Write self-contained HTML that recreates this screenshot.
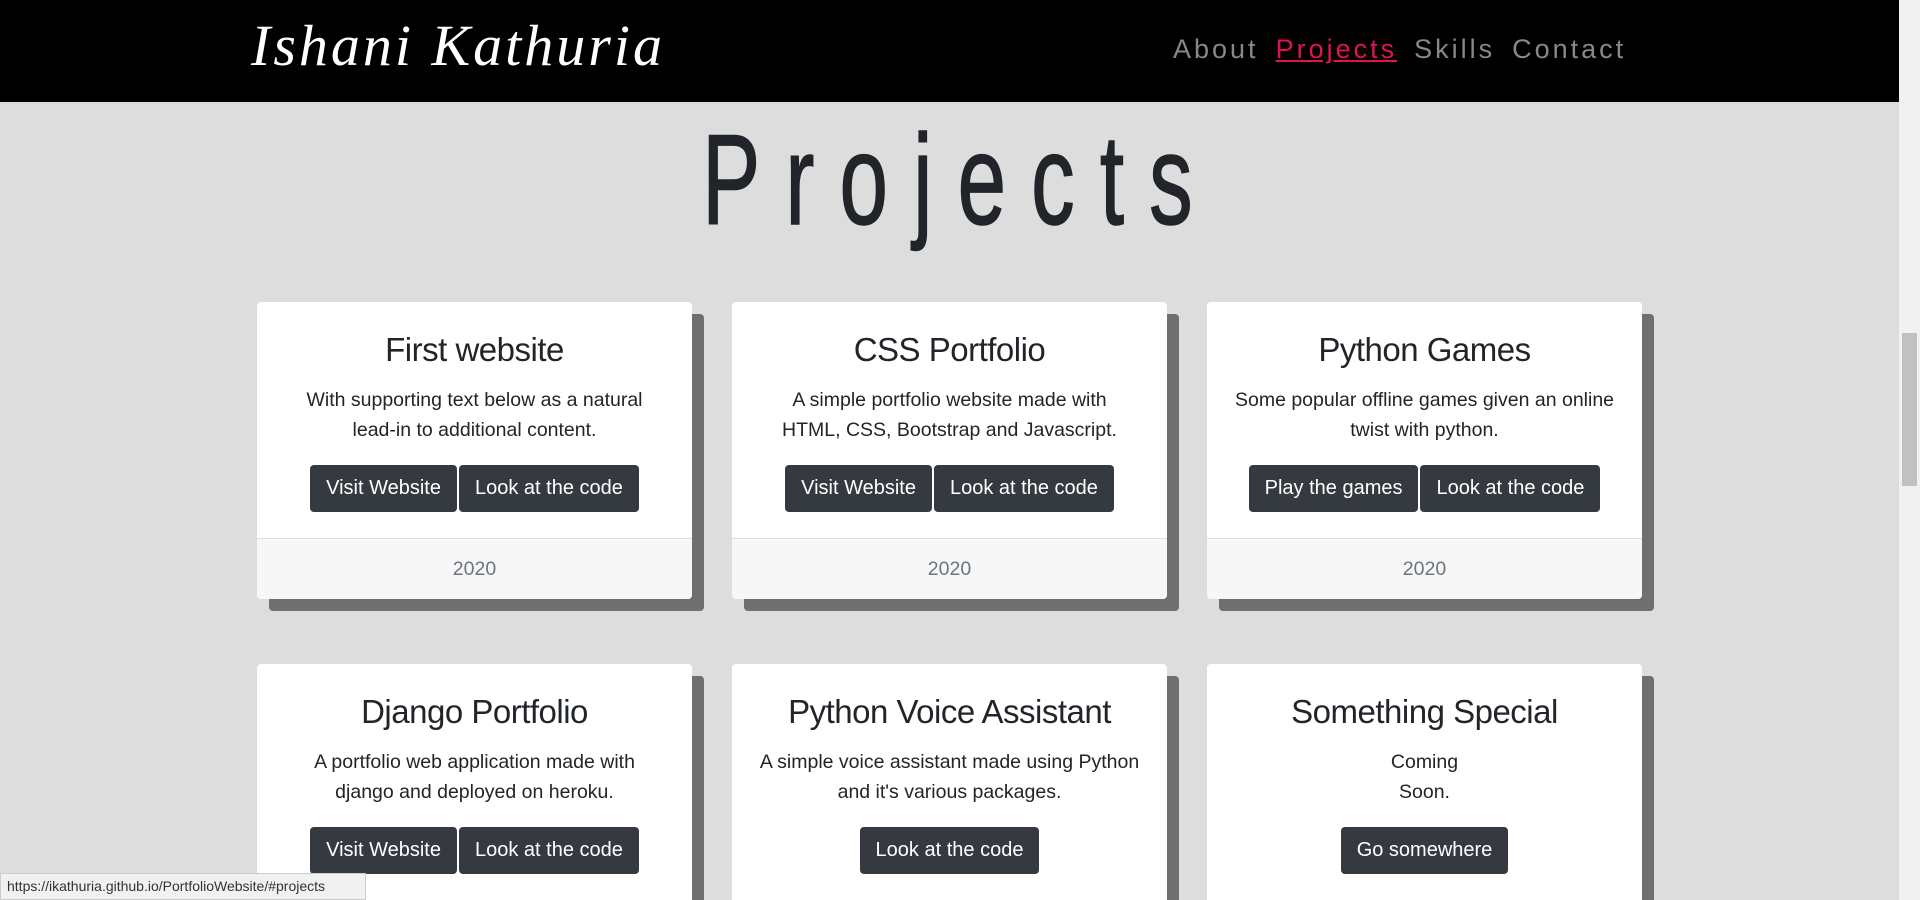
<!DOCTYPE html>
<html><head><meta charset="utf-8"><style>
*{box-sizing:border-box;margin:0;padding:0}
html{width:1920px;height:900px;overflow:hidden}
body{width:1920px;height:900px;overflow:hidden;background:#dddddd;font-family:"Liberation Sans",sans-serif;position:relative}
#wrap{position:absolute;left:0;top:0;width:1920px;height:900px;overflow:hidden}
.hdr{position:absolute;left:0;top:0;width:1899px;height:102px;background:#000}
.logo{position:absolute;left:251px;top:12px;color:#fff;font-family:"URW Chancery L","Liberation Serif",cursive;font-style:italic;font-size:58px;letter-spacing:3px}
.nav{position:absolute;top:34px;left:1173px;font-size:27px;letter-spacing:3px;color:#888;white-space:nowrap}
.nav span{margin-right:17px}
.nav .act{color:#e0144c;text-decoration:underline}
h1{position:absolute;left:0;width:1899px;top:106px;text-align:center;font-weight:normal;font-size:128px;color:#212529;letter-spacing:37px;padding-left:37px;transform:scaleX(0.68);transform-origin:943px 0;line-height:150px;-webkit-text-stroke:1.5px #212529}
.card{position:absolute;width:435px;height:297px;background:#fff;border-radius:4px;box-shadow:12px 12px 0 #6f6f6f;text-align:center;overflow:hidden}
.card.r2{height:236px;border-radius:4px 4px 0 0;box-shadow:12px 12px 0 #6f6f6f}
.card h5{font-weight:normal;font-size:33px;color:#212529;margin-top:28px;line-height:40px;letter-spacing:-0.5px}
.card p{font-size:19.5px;line-height:30px;color:#212529;margin-top:15px}
.btns{margin-top:20px;height:47px}
.b{display:inline-block;background:#343a40;color:#fff;font-size:20px;height:47px;line-height:47px;padding:0 16px;border-radius:4px;margin:0 1px}
.ft{position:absolute;left:0;top:236px;width:100%;height:61px;background:#f7f7f7;border-top:1px solid #ddd;color:#6c757d;font-size:19.5px;line-height:60px}
.sb{position:absolute;right:0;top:0;width:21px;height:900px;background:#f1f1f1}
.th{position:absolute;right:3px;top:333px;width:15px;height:153px;background:#c1c1c1}
.st{position:absolute;left:0;top:873px;height:27px;width:366px;background:#f1f1f1;border:1px solid #ccc;font-size:14px;line-height:25px;padding-left:6px;color:#333}
</style></head><body><div id="wrap">
<div class="hdr"><div class="logo">Ishani Kathuria</div>
<div class="nav"><span>About</span><span class="act">Projects</span><span>Skills</span><span>Contact</span></div></div>
<h1>Projects</h1>

<div class="card" style="left:257px;top:302px"><h5>First website</h5><p>With supporting text below as a natural<br>lead-in to additional content.</p><div class="btns"><span class="b">Visit Website</span><span class="b">Look at the code</span></div><div class="ft">2020</div></div>
<div class="card" style="left:732px;top:302px"><h5>CSS Portfolio</h5><p>A simple portfolio website made with<br>HTML, CSS, Bootstrap and Javascript.</p><div class="btns"><span class="b">Visit Website</span><span class="b">Look at the code</span></div><div class="ft">2020</div></div>
<div class="card" style="left:1207px;top:302px"><h5>Python Games</h5><p>Some popular offline games given an online<br>twist with python.</p><div class="btns"><span class="b">Play the games</span><span class="b">Look at the code</span></div><div class="ft">2020</div></div>

<div class="card r2" style="left:257px;top:664px"><h5>Django Portfolio</h5><p>A portfolio web application made with<br>django and deployed on heroku.</p><div class="btns"><span class="b">Visit Website</span><span class="b">Look at the code</span></div></div>
<div class="card r2" style="left:732px;top:664px"><h5>Python Voice Assistant</h5><p>A simple voice assistant made using Python<br>and it's various packages.</p><div class="btns"><span class="b">Look at the code</span></div></div>
<div class="card r2" style="left:1207px;top:664px"><h5>Something Special</h5><p>Coming<br>Soon.</p><div class="btns"><span class="b">Go somewhere</span></div></div>

<div class="sb"><div class="th"></div></div>
<div class="st">https://ikathuria.github.io/PortfolioWebsite/#projects</div>
</div></body></html>
